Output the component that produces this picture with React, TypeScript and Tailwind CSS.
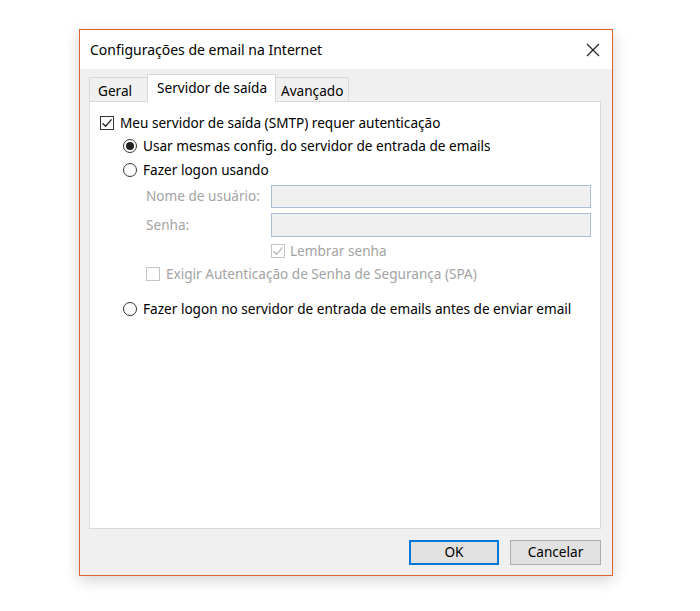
import React from "react";

const font = { fontFamily: '"Noto Sans", "Open Sans", sans-serif' };

function Check({ disabled, checked }: { disabled?: boolean; checked?: boolean }) {
  return (
    <div
      className={`w-[14px] h-[14px] border flex items-center justify-center shrink-0 ${
        disabled ? "border-[#c4c4c4] bg-white" : "border-[#333] bg-white"
      }`}
    >
      {checked && (
        <svg width="12" height="12" viewBox="0 0 12 12">
          <path d="M1.5 6.2 L4.6 9.2 L10.6 2.4" fill="none" stroke={disabled ? "#b8b8b8" : "#222"} strokeWidth="1.3" />
        </svg>
      )}
    </div>
  );
}

function Radio({ checked }: { checked?: boolean }) {
  return (
    <div className="w-[14px] h-[14px] rounded-full border border-[#333] bg-white flex items-center justify-center shrink-0">
      {checked && <div className="w-[8px] h-[8px] rounded-full bg-[#222]" />}
    </div>
  );
}

export default function App() {
  return (
    <div className="w-[700px] h-[611px] bg-white pt-[29px] pl-[79px]" style={font}>
      <div className="w-[534px] h-[547px] border border-[#e4602f] bg-[#f0f0f0] flex flex-col shadow-[0_4px_14px_rgba(0,0,0,0.18)]">
        <div className="h-[39px] bg-white flex items-center justify-between pl-[10px] pr-[12px] shrink-0">
          <span className="text-[14px] text-black">Configurações de email na Internet</span>
          <svg width="14" height="14" viewBox="0 0 14 14">
            <path d="M1 1 L13 13 M13 1 L1 13" stroke="#222" strokeWidth="1.2" />
          </svg>
        </div>
        <div className="flex-1 flex flex-col pl-[9px] pr-[11px] pt-[5px]">
          <div className="flex items-end h-[28px] relative z-10 -mb-px">
            <div className="w-[59px] h-[24px] border border-[#d9d9d9] border-b-0 bg-[#f0f0f0] flex items-center pl-[8px] pt-[3px] text-[13.6px] text-black mb-px">
              Geral
            </div>
            <div className="w-[129px] h-[28px] border border-[#d9d9d9] border-b-0 bg-white flex items-center pl-[9px] text-[13.6px] text-black -mx-px">
              Servidor de saída
            </div>
            <div className="w-[74px] h-[24px] border border-[#d9d9d9] border-b-0 bg-[#f0f0f0] flex items-center pl-[5px] pt-[3px] text-[13.6px] text-black mb-px">
              Avançado
            </div>
          </div>
          <div className="w-[512px] h-[428px] border border-[#d9d9d9] bg-white flex flex-col text-[13.6px] text-black pl-[10px]">
            <div className="flex items-center gap-[6px] h-[24px] mt-[9px]">
              <Check checked />
              <span>Meu servidor de saída (SMTP) requer autenticação</span>
            </div>
            <div className="flex items-center gap-[6px] h-[22px] ml-[23px]">
              <Radio checked />
              <span>Usar mesmas config. do servidor de entrada de emails</span>
            </div>
            <div className="flex items-center gap-[6px] h-[26px] ml-[23px]">
              <Radio />
              <span>Fazer logon usando</span>
            </div>
            <div className="flex items-center h-[23px] ml-[46px] mt-[2px]">
              <span className="w-[125px] text-[#a3a3a3]">Nome de usuário:</span>
              <div className="w-[320px] h-[23px] border border-[#a9bdd8] bg-[#f0f0f0]" />
            </div>
            <div className="flex items-center h-[24px] ml-[46px] mt-[5px]">
              <span className="w-[125px] text-[#a3a3a3]">Senha:</span>
              <div className="w-[320px] h-[24px] border border-[#a9bdd8] bg-[#f0f0f0]" />
            </div>
            <div className="flex items-center gap-[5px] h-[22px] ml-[171px] mt-[3px]">
              <Check disabled checked />
              <span className="text-[#a3a3a3]">Lembrar senha</span>
            </div>
            <div className="flex items-center gap-[6px] h-[22px] ml-[46px] mt-[1px]">
              <Check disabled />
              <span className="text-[#a3a3a3]">Exigir Autenticação de Senha de Segurança (SPA)</span>
            </div>
            <div className="flex items-center gap-[6px] h-[22px] ml-[23px] mt-[13px]">
              <Radio />
              <span>Fazer logon no servidor de entrada de emails antes de enviar email</span>
            </div>
          </div>
          <div className="flex justify-end gap-[11px] mt-[11px]">
            <button className="w-[90px] h-[25px] border-2 border-[#0078d7] bg-[#e1e1e1] text-[13.6px] text-black flex items-center justify-center">
              OK
            </button>
            <button className="w-[91px] h-[25px] border border-[#adadad] bg-[#e1e1e1] text-[13.6px] text-black flex items-center justify-center">
              Cancelar
            </button>
          </div>
        </div>
      </div>
    </div>
  );
}
